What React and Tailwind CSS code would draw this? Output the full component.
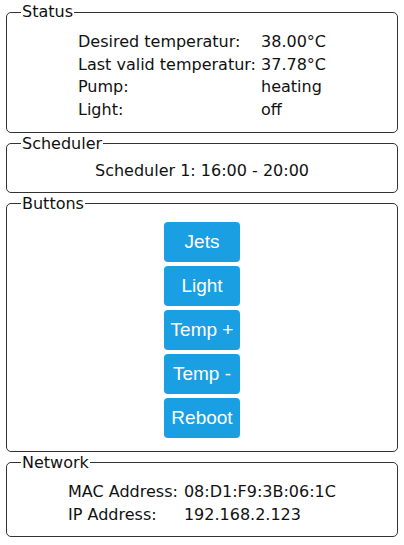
const status = [
  ['Desired temperatur:', '38.00°C'],
  ['Last valid temperatur:', '37.78°C'],
  ['Pump:', 'heating'],
  ['Light:', 'off'],
];

const network = [
  ['MAC Address:', '08:D1:F9:3B:06:1C'],
  ['IP Address:', '192.168.2.123'],
];

const buttons = ['Jets', 'Light', 'Temp +', 'Temp -', 'Reboot'];

const Box = ({ title, children, className = '' }) => (
  <fieldset className={`mx-[6px] border border-[#333] rounded-[5px] px-[14px] ${className}`}>
    <legend className="px-[1px] leading-[20px]">{title}</legend>
    {children}
  </fieldset>
);

const Table = ({ rows, gap }) => (
  <div className="flex justify-center">
    <div className={`grid grid-cols-[auto_auto] ${gap} leading-[22.7px]`}>
      {rows.map(([k, v]) => (
        <div key={k} className="contents">
          <span>{k}</span>
          <span>{v}</span>
        </div>
      ))}
    </div>
  </div>
);

export default function App() {
  return (
    <div className="w-[404px] h-[545px] bg-white text-[#111] text-[16px] pt-[2px] flex flex-col gap-[1px] font-['DejaVu_Sans',sans-serif]">
      <Box title="Status" className="pt-[9px] pb-[10px]">
        <Table rows={status} gap="gap-x-[5px]" />
      </Box>
      <Box title="Scheduler" className="pt-[6px] pb-[10px]">
        <div className="text-center leading-[22px]">Scheduler 1: 16:00 - 20:00</div>
      </Box>
      <Box title="Buttons" className="pt-[8px] pb-[13px]">
        <div className="flex flex-col items-center gap-[4px]">
          {buttons.map((b) => (
            <button
              key={b}
              className="w-[76px] h-[40px] rounded-[4px] bg-[#1a9fe3] text-white text-[19px] font-['Liberation_Sans',Arial,sans-serif]"
            >
              {b}
            </button>
          ))}
        </div>
      </Box>
      <Box title="Network" className="pt-[8px] pb-[10px]">
        <Table rows={network} gap="gap-x-[6px]" />
      </Box>
    </div>
  );
}
